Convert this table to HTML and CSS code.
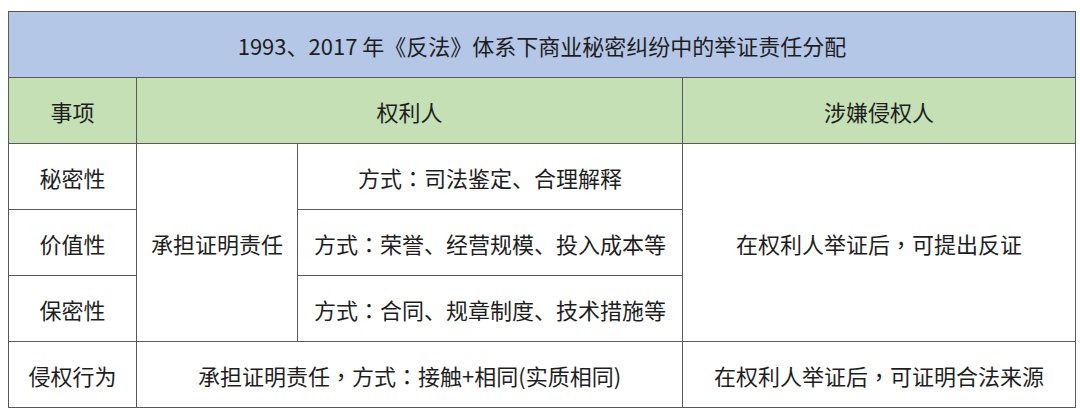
FILE: index.html
```html
<!DOCTYPE html>
<html lang="zh-CN">
<head>
<meta charset="utf-8">
<title>举证责任分配</title>
<link rel="stylesheet" href="styles.css">
</head>
<body>
<table class="evidence">
  <colgroup>
    <col class="c1"><col class="c2"><col class="c3"><col class="c4">
  </colgroup>
  <tr class="title-row">
    <td colspan="4">1993、2017 年《反法》体系下商业秘密纠纷中的举证责任分配</td>
  </tr>
  <tr class="head-row">
    <td>事项</td>
    <td colspan="2">权利人</td>
    <td>涉嫌侵权人</td>
  </tr>
  <tr>
    <td>秘密性</td>
    <td rowspan="3">承担证明责任</td>
    <td>方式<span class="punct" lang="zh-TW">：</span>司法鉴定、合理解释</td>
    <td rowspan="3">在权利人举证后<span class="punct" lang="zh-TW">，</span>可提出反证</td>
  </tr>
  <tr>
    <td>价值性</td>
    <td>方式<span class="punct" lang="zh-TW">：</span>荣誉、经营规模、投入成本等</td>
  </tr>
  <tr>
    <td>保密性</td>
    <td>方式<span class="punct" lang="zh-TW">：</span>合同、规章制度、技术措施等</td>
  </tr>
  <tr>
    <td>侵权行为</td>
    <td colspan="2">承担证明责任<span class="punct" lang="zh-TW">，</span>方式<span class="punct" lang="zh-TW">：</span>接触+相同(实质相同)</td>
    <td>在权利人举证后<span class="punct" lang="zh-TW">，</span>可证明合法来源</td>
  </tr>
</table>
</body>
</html>
```
FILE: styles.css
```css
html, body {
  margin: 0;
  padding: 0;
  background: #ffffff;
}

body {
  padding: 11px 0 0 8px;
  font-family: "Noto Sans CJK SC", "Noto Sans", sans-serif;
  color: #1e1e1e;
}

.evidence {
  border-collapse: collapse;
  table-layout: fixed;
  width: 1067px;
  font-size: 22px;
}

.c1 { width: 128px; }
.c2 { width: 161px; }
.c3 { width: 385px; }
.c4 { width: 393px; }

.evidence td {
  border: 1px solid #5a5a5a;
  height: 65px;
  padding: 0;
  text-align: center;
  vertical-align: middle;
  white-space: nowrap;
  line-height: 1;
}

.punct {
  font-family: "Noto Sans CJK TC", "Noto Sans CJK SC", sans-serif;
}

.title-row td {
  background: #b4c7e7;
}

.head-row td {
  background: #c5e0b4;
}
```
